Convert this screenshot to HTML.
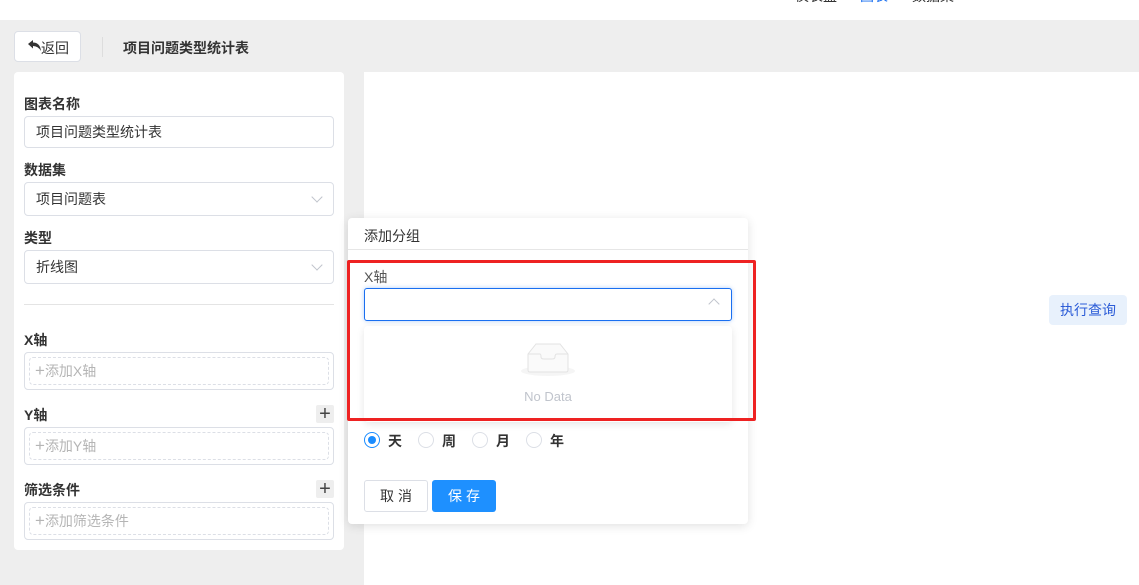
<!DOCTYPE html>
<html><head><meta charset="utf-8">
<style>
*{box-sizing:border-box;margin:0;padding:0}
body{width:1139px;height:585px;overflow:hidden;background:#eeeeee;font-family:"Liberation Sans","Noto Sans CJK SC",sans-serif;font-size:14px;color:#333;position:relative}
.a{position:absolute}
.top{left:0;top:0;width:1139px;height:20px;background:#fff;overflow:hidden}
.top span{position:absolute;top:-14px;font-size:14px}
.lbl{font-weight:bold;color:#333;font-size:14px}
.inp{background:#fff;border:1px solid #dcdfe6;border-radius:4px;height:32px;padding-left:11px;line-height:30px;color:#333;font-size:14px}
.chev{position:absolute;right:12px;top:10px;width:8px;height:8px;border-right:1px solid #c0c4cc;border-bottom:1px solid #c0c4cc;transform:rotate(45deg)}
.dash{background:#fff;border:1px solid #dcdfe6;border-radius:4px;height:38px;padding:4px}
.dash div{border:1px dashed #dcdfe6;border-radius:4px;height:28px;line-height:26px;padding-left:5px;color:#b5b5b5;font-size:14px}
.dash b{font-weight:normal;font-size:17px}
.plus{width:18px;height:18px;background:#eeeeee;border-radius:2px;text-align:center;line-height:18px;font-size:20px;color:#444}
.radio{width:16px;height:16px;border:1px solid #dcdfe6;border-radius:50%}
</style></head><body>
<div class="a top">
 <span style="left:795px;color:#333">仪表盘</span>
 <span style="left:860px;color:#1a6ff0">图表</span>
 <span style="left:912px;color:#333">数据集</span>
</div>
<div class="a" style="left:14px;top:31px;width:67px;height:31px;background:#fff;border:1px solid #dcdfe6;border-radius:4px;font-size:14px;color:#333">
<svg class="a" style="left:13px;top:8px" width="14" height="12" viewBox="0 0 14 12"><path d="M0 4 L5 0 V2.5 Q12 2.5 13 11 Q10 6 5 6 V8.5 Z" fill="#333"/></svg>
<span class="a" style="left:26px;top:6px">返回</span></div>
<div class="a" style="left:102px;top:37px;width:1px;height:20px;background:#ddd"></div>
<div class="a" style="left:123px;top:38px;font-weight:bold;font-size:14px;color:#333">项目问题类型统计表</div>

<div class="a" style="left:14px;top:72px;width:330px;height:478px;background:#fff;border-radius:4px"></div>
<div class="a lbl" style="left:24px;top:94px">图表名称</div>
<div class="a inp" style="left:24px;top:116px;width:310px">项目问题类型统计表</div>
<div class="a lbl" style="left:24px;top:160px">数据集</div>
<div class="a inp" style="left:24px;top:182px;width:310px;height:34px;line-height:32px">项目问题表<i class="chev"></i></div>
<div class="a lbl" style="left:24px;top:228px">类型</div>
<div class="a inp" style="left:24px;top:250px;width:310px;height:34px;line-height:32px">折线图<i class="chev"></i></div>
<div class="a" style="left:24px;top:304px;width:310px;height:1px;background:#e4e4e4"></div>
<div class="a lbl" style="left:24px;top:330px">X轴</div>
<div class="a dash" style="left:24px;top:352px;width:310px"><div><b>+</b>添加X轴</div></div>
<div class="a lbl" style="left:24px;top:405px">Y轴</div>
<div class="a plus" style="left:316px;top:405px">+</div>
<div class="a dash" style="left:24px;top:427px;width:310px"><div><b>+</b>添加Y轴</div></div>
<div class="a lbl" style="left:24px;top:480px">筛选条件</div>
<div class="a plus" style="left:316px;top:480px">+</div>
<div class="a dash" style="left:24px;top:502px;width:310px"><div><b>+</b>添加筛选条件</div></div>

<div class="a" style="left:364px;top:72px;width:775px;height:513px;background:#fff"></div>
<div class="a" style="left:1049px;top:295px;width:78px;height:30px;background:#e8f1fc;border-radius:4px;color:#2a5bd7;text-align:center;line-height:30px;font-size:14px">执行查询</div>

<div class="a" style="left:348px;top:218px;width:400px;height:306px;background:#fff;border-radius:4px;box-shadow:0 2px 10px rgba(0,0,0,.12)"></div>
<div class="a" style="left:364px;top:226px;font-size:14px;color:#333">添加分组</div>
<div class="a" style="left:348px;top:249px;width:400px;height:1px;background:#e6e6e6"></div>
<div class="a" style="left:364px;top:267px;font-size:14px;color:#555">X轴</div>
<div class="a" style="left:364px;top:288px;width:368px;height:33px;border:1px solid #1a6ff0;border-radius:3px;box-shadow:0 0 4px rgba(26,111,240,.35);background:#fff"></div>
<div class="a" style="left:710px;top:300px;width:8px;height:8px;border-left:1px solid #c0c4cc;border-top:1px solid #c0c4cc;transform:rotate(45deg)"></div>
<div class="a" style="left:364px;top:326px;width:368px;height:96px;background:#fff;border-radius:4px;box-shadow:0 2px 8px rgba(0,0,0,.1)"></div>
<svg class="a" style="left:520px;top:340px" width="56" height="38" viewBox="0 0 56 38">
 <ellipse cx="28" cy="31" rx="27" ry="5" fill="#f5f5f5"/>
 <path d="M8 14 L16 4 H40 L48 14 V30 Q48 32 46 32 H10 Q8 32 8 30 Z" fill="#fafafa" stroke="#e3e3e3"/>
 <path d="M8 14 H20 Q21 14 21 17 Q21 19 24 19 H32 Q35 19 35 17 Q35 14 37 14 H48" fill="none" stroke="#e3e3e3"/>
</svg>
<div class="a" style="left:364px;top:389px;width:368px;text-align:center;color:#c0c4cc;font-size:13px">No Data</div>
<div class="a" style="left:347px;top:260px;width:409px;height:161px;border:3px solid #ee2222;border-radius:2px"></div>

<div class="a radio" style="left:364px;top:432px;border:1px solid #1a8cff"><div style="width:8px;height:8px;border-radius:50%;background:#1a8cff;margin:3px"></div></div>
<div class="a" style="left:388px;top:431px;font-weight:bold;color:#333">天</div>
<div class="a radio" style="left:418px;top:432px"></div>
<div class="a" style="left:442px;top:431px;font-weight:bold;color:#333">周</div>
<div class="a radio" style="left:472px;top:432px"></div>
<div class="a" style="left:496px;top:431px;font-weight:bold;color:#333">月</div>
<div class="a radio" style="left:526px;top:432px"></div>
<div class="a" style="left:550px;top:431px;font-weight:bold;color:#333">年</div>

<div class="a" style="left:364px;top:480px;width:64px;height:32px;border:1px solid #dcdfe6;border-radius:3px;text-align:center;line-height:30px;color:#333;letter-spacing:4px;padding-left:4px">取消</div>
<div class="a" style="left:432px;top:480px;width:64px;height:32px;background:#1e90ff;border-radius:3px;text-align:center;line-height:32px;color:#fff;letter-spacing:4px;padding-left:4px">保存</div>
</body></html>
